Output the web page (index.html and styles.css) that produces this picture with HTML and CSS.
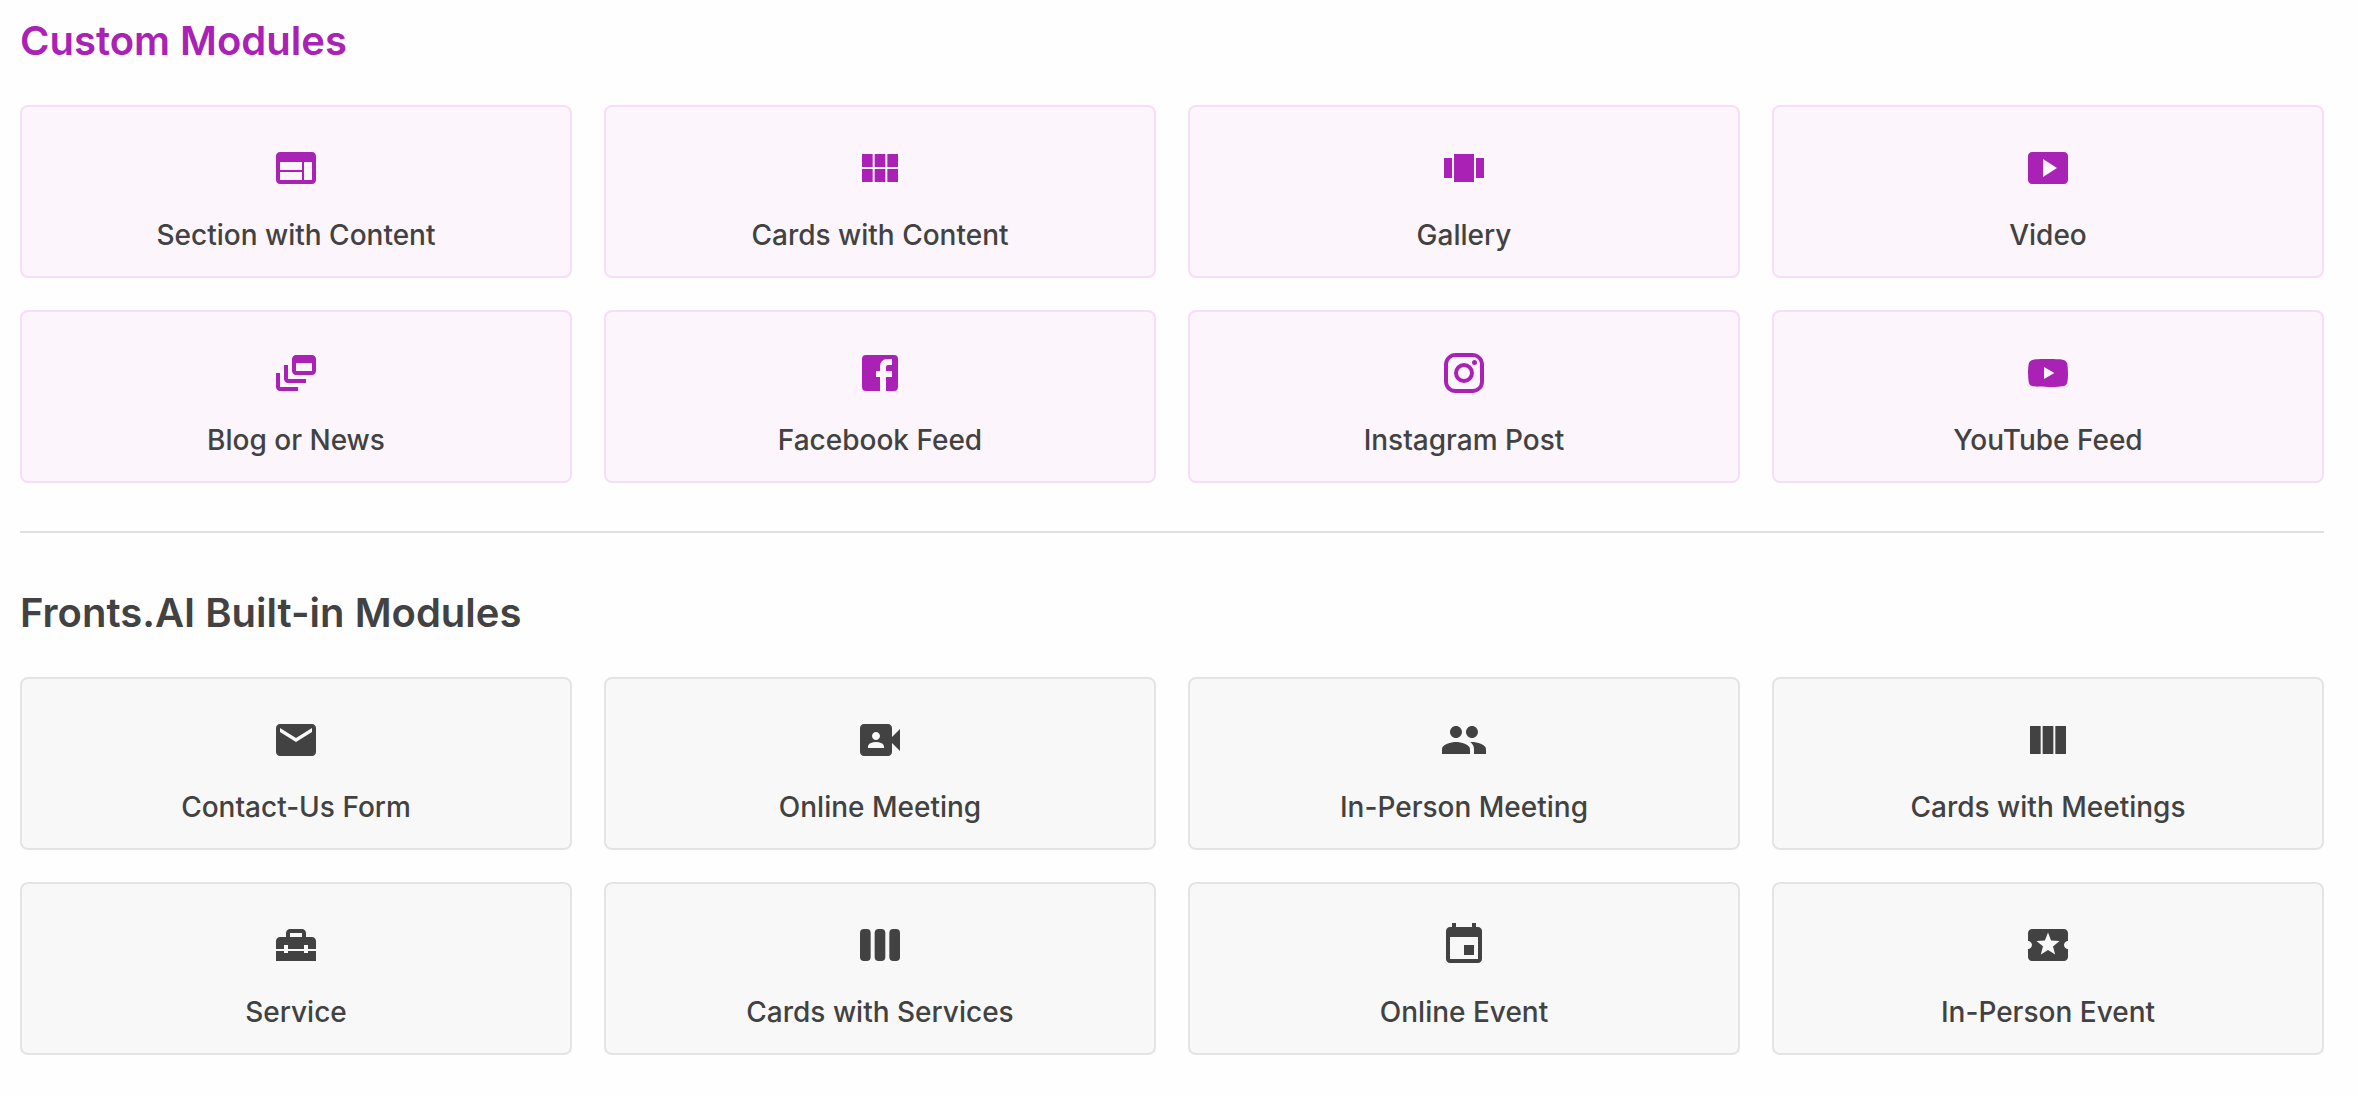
FILE: index.html
```html
<!DOCTYPE html>
<html lang="en">
<head>
<meta charset="utf-8">
<meta name="viewport" content="width=device-width, initial-scale=1">
<title>Modules</title>
<link rel="stylesheet" href="styles.css">
</head>
<body>
<main class="page">
  <section class="modules modules--custom" aria-labelledby="custom-title">
    <h2 class="modules__title" id="custom-title">Custom Modules</h2>
    <div class="modules__grid">
      <button class="card" type="button">
        <svg class="card__icon" viewBox="0 0 24 24" aria-hidden="true"><path d="M20 4H4c-1.1 0-1.99.9-1.99 2L2 18c0 1.1.9 2 2 2h16c1.1 0 2-.9 2-2V6c0-1.1-.9-2-2-2zm-5 14H4v-4h11v4zm0-5H4V9h11v4zm5 5h-4V9h4v9z"/></svg>
        <span class="card__label">Section with Content</span>
      </button>
      <button class="card" type="button">
        <svg class="card__icon" viewBox="0 0 24 24" aria-hidden="true"><path d="M14.67 5v6.5H9.33V5h5.34zm1 6.5H21V5h-5.33v6.5zm-1 7.5v-6.5H9.33V19h5.34zm1-6.5V19H21v-6.5h-5.33zm-7.34 0H3V19h5.33v-6.5zm0-1V5H3v6.5h5.33z"/></svg>
        <span class="card__label">Cards with Content</span>
      </button>
      <button class="card" type="button">
        <svg class="card__icon" viewBox="0 0 24 24" aria-hidden="true"><path d="M2 7h4v10H2V7zm5 12h10V5H7v14zM18 7h4v10h-4V7z"/></svg>
        <span class="card__label">Gallery</span>
      </button>
      <button class="card" type="button">
        <svg class="card__icon" viewBox="0 0 24 24" aria-hidden="true"><path d="M20 4H4c-1.1 0-2 .9-2 2v12c0 1.1.9 2 2 2h16c1.1 0 2-.9 2-2V6c0-1.1-.9-2-2-2zM9.5 16.5v-9l7 4.5-7 4.5z"/></svg>
        <span class="card__label">Video</span>
      </button>
      <button class="card" type="button">
        <svg class="card__icon" viewBox="0 0 24 24" aria-hidden="true"><path d="M8 8H6v7c0 1.1.9 2 2 2h9v-2H8V8z"/><path d="M20 3h-8c-1.1 0-2 .9-2 2v6c0 1.1.9 2 2 2h8c1.1 0 2-.9 2-2V5c0-1.1-.9-2-2-2zm0 8h-8V7h8v4z"/><path d="M4 12H2v7c0 1.1.9 2 2 2h9v-2H4v-7z"/></svg>
        <span class="card__label">Blog or News</span>
      </button>
      <button class="card" type="button">
        <svg class="card__icon" viewBox="0 0 24 24" aria-hidden="true"><path d="M5 3h14a2 2 0 0 1 2 2v14a2 2 0 0 1-2 2H5a2 2 0 0 1-2-2V5a2 2 0 0 1 2-2m13 2h-2.500A3.500 3.500 0 0 0 12 8.500V11h-2v3h2v7h3v-7h3v-3h-3V9a1 1 0 0 1 1-1h2V5z"/></svg>
        <span class="card__label">Facebook Feed</span>
      </button>
      <button class="card" type="button">
        <svg class="card__icon" viewBox="0 0 24 24" aria-hidden="true"><path d="M7.800 2h8.400C19.400 2 22 4.600 22 7.800v8.400a5.800 5.800 0 0 1-5.800 5.800H7.800C4.600 22 2 19.400 2 16.200V7.800A5.800 5.800 0 0 1 7.800 2m-.2 2A3.600 3.600 0 0 0 4 7.600v8.800C4 18.390 5.610 20 7.600 20h8.800a3.600 3.600 0 0 0 3.600-3.600V7.600C20 5.610 18.390 4 16.400 4H7.600m9.650 1.500a1.250 1.250 0 0 1 1.250 1.250A1.250 1.250 0 0 1 17.250 8 1.250 1.250 0 0 1 16 6.750a1.250 1.250 0 0 1 1.250-1.250M12 7a5 5 0 0 1 5 5 5 5 0 0 1-5 5 5 5 0 0 1-5-5 5 5 0 0 1 5-5m0 2a3 3 0 0 0-3 3 3 3 0 0 0 3 3 3 3 0 0 0 3-3 3 3 0 0 0-3-3z"/></svg>
        <span class="card__label">Instagram Post</span>
      </button>
      <button class="card" type="button">
        <svg class="card__icon" viewBox="0 0 24 24" aria-hidden="true"><path d="M10 15l5.190-3L10 9v6m11.560-7.830c.13.47.22 1.100.28 1.900.07.8.1 1.490.1 2.090L22 12c0 2.190-.16 3.800-.44 4.830-.25.9-.83 1.480-1.730 1.730-.47.13-1.330.22-2.650.28-1.300.07-2.490.1-3.590.1L12 19c-4.190 0-6.800-.16-7.830-.44-.9-.25-1.480-.83-1.730-1.730-.13-.47-.22-1.100-.28-1.900-.07-.8-.1-1.490-.1-2.090L2 12c0-2.190.16-3.800.44-4.830.25-.9.83-1.480 1.730-1.730.47-.13 1.330-.22 2.650-.28 1.300-.07 2.490-.1 3.590-.1L12 5c4.190 0 6.800.16 7.830.44.9.25 1.480.83 1.730 1.730z"/></svg>
        <span class="card__label">YouTube Feed</span>
      </button>
    </div>
  </section>

  <hr class="divider">

  <section class="modules" aria-labelledby="builtin-title">
    <h2 class="modules__title" id="builtin-title">Fronts.AI Built-in Modules</h2>
    <div class="modules__grid">
      <button class="card" type="button">
        <svg class="card__icon" viewBox="0 0 24 24" aria-hidden="true"><path d="M20 4H4c-1.1 0-1.99.9-1.99 2L2 18c0 1.1.9 2 2 2h16c1.1 0 2-.9 2-2V6c0-1.1-.9-2-2-2zm0 4-8 5-8-5V6l8 5 8-5v2z"/></svg>
        <span class="card__label">Contact-Us Form</span>
      </button>
      <button class="card" type="button">
        <svg class="card__icon" viewBox="0 0 24 24" aria-hidden="true"><path d="M18 10.480V6c0-1.100-.9-2-2-2H4c-1.100 0-2 .9-2 2v12c0 1.100.9 2 2 2h12c1.100 0 2-.9 2-2v-4.480l4 3.980v-11l-4 3.980zM10 8c1.100 0 2 .9 2 2s-.9 2-2 2-2-.9-2-2 .9-2 2-2zm4 8H6v-.57c0-.81.48-1.530 1.220-1.850.85-.37 1.790-.58 2.780-.58.99 0 1.930.21 2.780.58.74.32 1.220 1.040 1.220 1.850V16z"/></svg>
        <span class="card__label">Online Meeting</span>
      </button>
      <button class="card" type="button">
        <svg class="card__icon" viewBox="0 0 24 24" aria-hidden="true"><path d="M16 11c1.660 0 2.990-1.340 2.990-3S17.660 5 16 5c-1.660 0-3 1.340-3 3s1.340 3 3 3zm-8 0c1.660 0 2.990-1.340 2.990-3S9.660 5 8 5C6.340 5 5 6.340 5 8s1.340 3 3 3zm0 2c-2.330 0-7 1.170-7 3.500V19h14v-2.500c0-2.330-4.670-3.500-7-3.500zm8 0c-.29 0-.62.02-.97.05 1.160.84 1.970 1.970 1.970 3.450V19h6v-2.500c0-2.330-4.670-3.500-7-3.500z"/></svg>
        <span class="card__label">In-Person Meeting</span>
      </button>
      <button class="card" type="button">
        <svg class="card__icon" viewBox="0 0 24 24" aria-hidden="true"><path d="M14.670 5v14H9.330V5h5.340zm1 14H21V5h-5.330v14zm-7.340 0V5H3v14h5.330z"/></svg>
        <span class="card__label">Cards with Meetings</span>
      </button>
      <button class="card" type="button">
        <svg class="card__icon" viewBox="0 0 24 24" aria-hidden="true"><path d="M18 16h-2v-1H8v1H6v-1H2v5h20v-5h-4v1zm2-8h-3V6c0-1.100-.9-2-2-2H9c-1.100 0-2 .9-2 2v2H4c-1.100 0-2 .9-2 2v4h4v-2h2v2h8v-2h2v2h4v-4c0-1.100-.9-2-2-2zm-5 0H9V6h6v2z"/></svg>
        <span class="card__label">Service</span>
      </button>
      <button class="card" type="button">
        <svg class="card__icon" viewBox="0 0 24 24" aria-hidden="true"><rect x="2" y="4" width="5.330" height="16" rx="2"/><rect x="9.330" y="4" width="5.330" height="16" rx="2"/><rect x="16.670" y="4" width="5.330" height="16" rx="2"/></svg>
        <span class="card__label">Cards with Services</span>
      </button>
      <button class="card" type="button">
        <svg class="card__icon" viewBox="0 0 24 24" aria-hidden="true"><path d="M17 12h-5v5h5v-5zM16 1v2H8V1H6v2H5c-1.110 0-1.990.9-1.990 2L3 19c0 1.100.89 2 2 2h14c1.100 0 2-.9 2-2V5c0-1.100-.9-2-2-2h-1V1h-2zm3 18H5V8h14v11z"/></svg>
        <span class="card__label">Online Event</span>
      </button>
      <button class="card" type="button">
        <svg class="card__icon" viewBox="0 0 24 24" aria-hidden="true"><path d="M20 12c0-1.100.9-2 2-2V6c0-1.100-.9-2-2-2H4c-1.100 0-1.990.9-1.990 2v4c1.100 0 1.990.9 1.990 2s-.89 2-2 2v4c0 1.100.9 2 2 2h16c1.100 0 2-.9 2-2v-4c-1.100 0-2-.9-2-2zm-4.420 4.800L12 14.500l-3.580 2.300 1.080-4.120-3.290-2.690 4.240-.25L12 5.800l1.540 3.950 4.240.25-3.290 2.690 1.090 4.110z"/></svg>
        <span class="card__label">In-Person Event</span>
      </button>
    </div>
  </section>
</main>
</body>
</html>
```

FILE: styles.css
```css
* {
  box-sizing: border-box;
}

body {
  margin: 0;
  background: #fefefe;
  color: #424242;
  font-family: Inter, "Liberation Sans", sans-serif;
}

.page {
  padding: 17px 34px 40px 20px;
}

.modules {
  --card-bg: #f8f8f8;
  --card-border: #e4e4e4;
  --accent: #424242;
}

.modules--custom {
  --card-bg: #fcf5fc;
  --card-border: #f4dff6;
  --accent: #aa22b5;
}

.modules__title {
  margin: 0 0 40px;
  color: var(--accent);
  font-size: 40px;
  font-weight: 600;
  line-height: 48px;
}

.modules__grid {
  display: grid;
  grid-template-columns: repeat(4, 1fr);
  gap: 32px;
}

.card {
  display: flex;
  flex-direction: column;
  align-items: center;
  gap: 25px;
  padding: 37px 24px 23px;
  border: 2px solid var(--card-border);
  border-radius: 8px;
  background: var(--card-bg);
  color: inherit;
  font-family: inherit;
  cursor: pointer;
}

.card__icon {
  width: 48px;
  height: 48px;
  fill: var(--accent);
}

.card__label {
  font-size: 28px;
  font-weight: 500;
  line-height: 36px;
}

.divider {
  height: 2px;
  margin: 48px 0 56px;
  border: 0;
  background: #e0e0e0;
}

@media (max-width: 1300px) {
  .modules__grid {
    grid-template-columns: repeat(2, 1fr);
  }
}
```
